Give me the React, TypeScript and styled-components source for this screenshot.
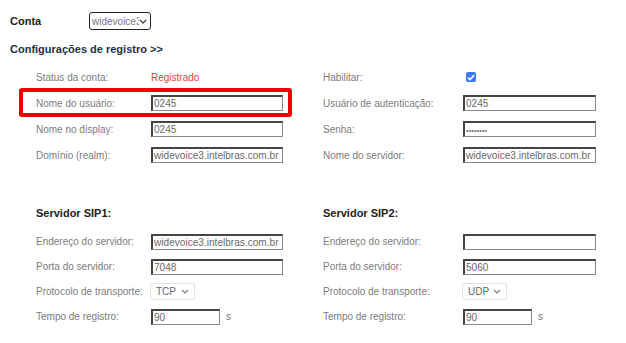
import styled, { createGlobalStyle } from "styled-components";

const GlobalStyle = createGlobalStyle`
  body {
    margin: 0;
    background: #fff;
    font-family: "Liberation Sans", Arial, sans-serif;
  }
`;

const Page = styled.div`
  width: 626px;
  height: 343px;
  padding-left: 10px;
  box-sizing: border-box;
  overflow: hidden;
`;

const AccountRow = styled.div`
  display: flex;
  align-items: center;
  margin-top: 12px;
  height: 18px;
`;

const AccountLabel = styled.div`
  width: 79px;
  font-size: 11px;
  font-weight: bold;
  color: #222;
`;

const AccountSelect = styled.div`
  display: flex;
  align-items: center;
  width: 62px;
  height: 18px;
  box-sizing: border-box;
  border: 1px solid #222;
  border-radius: 3px;
  padding: 0 2px 0 2px;
  font-size: 10px;
  color: #777;
  overflow: hidden;
  white-space: nowrap;
  span {
    width: 47px;
    overflow: hidden;
  }
`;

const Title = styled.div`
  margin-top: 12px;
  font-size: 11px;
  line-height: 14px;
  font-weight: bold;
  color: #24313f;
`;

const Section = styled.div<{ $top: number }>`
  position: relative;
  margin-top: ${(p) => p.$top}px;
  padding-left: 26px;
  display: grid;
  grid-template-columns: 115px 172px 140px 1fr;
`;

const SubTitle = styled.div`
  grid-column: span 2;
  font-size: 11px;
  line-height: 14px;
  font-weight: bold;
  color: #222;
  margin-bottom: 9px;
`;

const Cell = styled.div<{ $h: number }>`
  display: flex;
  align-items: center;
  height: ${(p) => p.$h}px;
`;

const Label = styled(Cell)`
  font-size: 10px;
  color: #7c7c7c;
  white-space: nowrap;
`;

const Status = styled.span`
  font-size: 10px;
  color: #f23b3b;
`;

const TextBox = styled.div<{ $w: number }>`
  width: ${(p) => p.$w}px;
  height: 16px;
  box-sizing: border-box;
  border-style: solid;
  border-width: 2px 1px 1px 2px;
  border-color: #444 #8a8a8a #8a8a8a #444;
  background: #fff;
  padding: 0 1px;
  font-size: 10.1px;
  line-height: 13px;
  color: #6a6a6a;
  white-space: nowrap;
  overflow: hidden;
`;

const Dots = styled.span`
  font-size: 7px;
  letter-spacing: 0.2px;
`;

const Unit = styled.span`
  margin-left: 6px;
  font-size: 10px;
  color: #7c7c7c;
`;

const Combo = styled.div`
  display: flex;
  align-items: center;
  justify-content: space-between;
  width: 45px;
  height: 17px;
  box-sizing: border-box;
  margin-left: -1px;
  border: 1px solid #e2e2e2;
  border-radius: 2px;
  padding: 0 5px 0 5px;
  font-size: 10px;
  color: #666;
`;

const Check = styled.div`
  width: 10px;
  height: 10px;
  margin-left: 3px;
  border-radius: 2px;
  background: #3d7af0;
  display: flex;
  align-items: center;
  justify-content: center;
`;

const Highlight = styled.div`
  position: absolute;
  left: 9px;
  top: 24px;
  width: 273px;
  height: 29px;
  box-sizing: border-box;
  border: 4px solid #ee0000;
  border-radius: 3px;
  pointer-events: none;
`;

const Chevron = ({ color = "#888" }: { color?: string }) => (
  <svg width="8" height="5" viewBox="0 0 8 5">
    <path d="M1 1 L4 4 L7 1" fill="none" stroke={color} strokeWidth="1.3" />
  </svg>
);

type Row = [string, JSX.Element, string, JSX.Element];

const sip = (host: string, port: string, proto: string) => [
  ["Endereço do servidor:", host],
  ["Porta do servidor:", port],
  ["Protocolo de transporte:", proto],
  ["Tempo de registro:", "90"],
];

function Field({ label, value, w }: { label: string; value: string; w: number }) {
  if (label.startsWith("Protocolo")) {
    return (
      <Combo>
        {value}
        <Chevron />
      </Combo>
    );
  }
  if (label.startsWith("Tempo")) {
    return (
      <>
        <TextBox $w={69}>{value}</TextBox>
        <Unit>s</Unit>
      </>
    );
  }
  return <TextBox $w={w}>{value}</TextBox>;
}

export default function App() {
  const reg: Row[] = [
    ["Status da conta:", <Status>Registrado</Status>, "Habilitar:",
      <Check>
        <svg width="8" height="7" viewBox="0 0 8 7">
          <path d="M1 3.6 L3 5.6 L7 1.2" fill="none" stroke="#fff" strokeWidth="1.6" />
        </svg>
      </Check>],
    ["Nome do usuário:", <TextBox $w={132}>0245</TextBox>, "Usuário de autenticação:", <TextBox $w={133}>0245</TextBox>],
    ["Nome no display:", <TextBox $w={132}>0245</TextBox>, "Senha:", <TextBox $w={133}><Dots>••••••••</Dots></TextBox>],
    ["Domínio (realm):", <TextBox $w={132}>widevoice3.intelbras.com.br</TextBox>, "Nome do servidor:", <TextBox $w={133}>widevoice3.intelbras.com.br</TextBox>],
  ];
  const s1 = sip("widevoice3.intelbras.com.br", "7048", "TCP");
  const s2 = sip("", "5060", "UDP");

  return (
    <>
      <GlobalStyle />
      <Page>
        <AccountRow>
          <AccountLabel>Conta</AccountLabel>
          <AccountSelect>
            <span>widevoice3</span>
            <Chevron color="#444" />
          </AccountSelect>
        </AccountRow>
        <Title>Configurações de registro &gt;&gt;</Title>

        <Section $top={8}>
          {reg.map(([l1, v1, l2, v2]) => (
            <>
              <Label $h={26}>{l1}</Label>
              <Cell $h={26}>{v1}</Cell>
              <Label $h={26}>{l2}</Label>
              <Cell $h={26}>{v2}</Cell>
            </>
          ))}
          <Highlight />
        </Section>

        <Section $top={38}>
          <SubTitle>Servidor SIP1:</SubTitle>
          <SubTitle>Servidor SIP2:</SubTitle>
          {s1.map(([l1, v1], i) => {
            const [l2, v2] = s2[i];
            return (
              <>
                <Label $h={25}>{l1}</Label>
                <Cell $h={25}><Field label={l1} value={v1} w={132} /></Cell>
                <Label $h={25}>{l2}</Label>
                <Cell $h={25}><Field label={l2} value={v2} w={133} /></Cell>
              </>
            );
          })}
        </Section>
      </Page>
    </>
  );
}
